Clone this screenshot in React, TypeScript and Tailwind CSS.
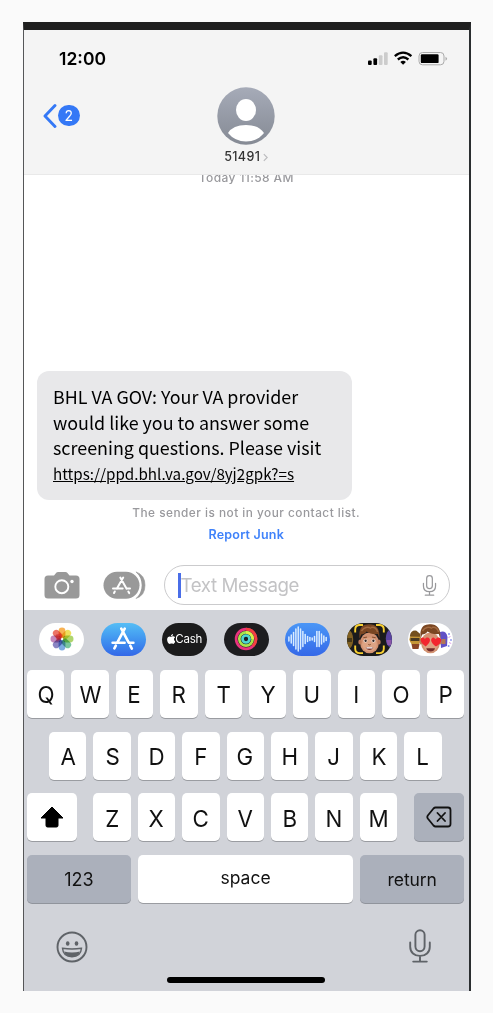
import React from "react";

const AppStoreGlyph = ({ className }: { className: string }) => (
  <svg viewBox="0 0 24 24" className={className} fill="none" stroke="currentColor" strokeLinecap="round">
    <path d="M10.3 1.6 17.6 15.4M13.7 1.6 6.4 15.4M19.3 18.6 20.8 21.6M4.8 18.6 3.4 21.4" />
    <path d="M1.600 15.800H13.600M18.200 15.800H22.400" />
  </svg>
);

const Mic = ({ className, width }: { className: string; width: number }) => (
  <svg viewBox="0 0 22 34" className={className} fill="none" stroke="currentColor" strokeWidth={width} strokeLinecap="round">
    <rect x="6.4" y="1.2" width="9.2" height="21" rx="4.6" />
    <path d="M1.2 13.5v4.2c0 5.8 4.2 9.2 9.8 9.2s9.8-3.4 9.8-9.2v-4.2M11 27v5.6M4.2 32.6h13.6" />
  </svg>
);

const Key = ({ label }: { label: string }) => (
  <div className="flex h-[48px] w-[37.4px] shrink-0 items-center justify-center rounded-[5px] bg-white pt-[2px] text-[23.5px] leading-none shadow-[0_1px_0_#9a9ca1]">
    <span className="scale-x-[0.95]">{label}</span>
  </div>
);

const Pill = ({ className, children }: { className: string; children: React.ReactNode }) => (
  <div className={"flex h-[33.5px] w-[45px] shrink-0 items-center justify-center overflow-hidden rounded-full " + className}>
    {children}
  </div>
);

const petals = ["#f7a83c", "#ecdc45", "#a4d05a", "#66bd90", "#6a9fdd", "#7a74bb", "#bb77b3", "#e9604f"];

const PhotosIcon = () => (
  <svg viewBox="-12 -12 24 24" className="size-[24px]">
    {petals.map((c, i) => (
      <rect key={c} x="-3.4" y="-11.5" width="6.8" height="10.6" rx="3.4" fill={c} className="mix-blend-multiply" opacity="0.88" transform={`rotate(${i * 45})`} />
    ))}
    <path d="M-6-4.500-1.500-5.500 0 0-5.500 2Z" fill="#d0202c" opacity="0.55" />
    <circle r="1.2" fill="#fff" opacity="0.6" />
  </svg>
);

const ActivityIcon = () => (
  <svg viewBox="-12 -12 24 24" className="size-[24px]" fill="none" strokeWidth="2.700">
    <circle r="9.9" stroke="#e8337c" />
    <path d="M0-9.9A9.9 9.9 0 0 1 7 7" stroke="#f3413f" />
    <circle r="6.7" stroke="#a9e34b" />
    <path d="M0-6.7A6.7 6.7 0 0 1 6.7 0" stroke="#d8f04a" />
    <circle r="3.5" stroke="#4fd6cf" />
  </svg>
);

const bars = [4, 8, 13, 20, 24, 20, 15, 9, 5, 3, 2, 5, 15, 15, 10, 6, 3];

const AudioIcon = () => (
  <svg viewBox="0 0 45 34" className="h-[34px] w-[45px]" stroke="#d9ecff" strokeWidth="1.5" strokeLinecap="round">
    {bars.map((h, i) => (
      <path key={i} d={`M${3.9 + i * 2.33} ${17 - h / 2}v${h}`} />
    ))}
  </svg>
);

const Face = ({ hearts }: { hearts?: boolean }) => (
  <g>
    <ellipse cx="22.5" cy="20.8" rx="9.4" ry="10.4" fill="#d29272" />
    <ellipse cx="13" cy="20" rx="1.7" ry="2.6" fill="#bf7c5c" />
    <ellipse cx="32" cy="20" rx="1.7" ry="2.6" fill="#bf7c5c" />
    <ellipse cx="22.5" cy="22.5" rx="7.3" ry="7" fill="#dda384" />
    <path d="M12.600 16.500C11.500 7.500 14.500 2.600 20 2.500 28 .8 33.500 6 32.300 16.500L30.800 12C27 12.600 22 11.500 19.500 9.500 18.500 11.500 16 12.300 14.200 12.500Z" fill="#7a4622" />
    <path d="M14.500 9C17 5 21 4.500 24 6.500M24 5.500c3-1 6 1 6.500 4.500" stroke="#a26a41" strokeWidth="1.500" fill="none" />
    {hearts ? (
      <g fill="#f2262f">
        <path d="M17.7 24.5C10.5 19.5 12.2 14.5 15.4 15.6L17 17C19 13.8 23 16 21.8 19.2 21.1 21.3 19.5 22.9 17.7 24.5Z" />
        <path d="M28 24.5C22 21 22 15.5 25.7 15.6L27.7 17.3C29.5 14.3 33.8 15.5 33.1 19 32.5 21.4 30 23.2 28 24.5Z" />
        <path d="M18.3 26.3h8.7c-.8 4.3-7.8 4.3-8.7 0Z" fill="#722a29" />
      </g>
    ) : (
      <g>
        <ellipse cx="18.5" cy="18.8" rx="1.9" ry="1.6" fill="#fff" />
        <ellipse cx="26.5" cy="18.8" rx="1.9" ry="1.6" fill="#fff" />
        <circle cx="18.6" cy="18.8" r="1.2" fill="#33231e" />
        <circle cx="26.4" cy="18.8" r="1.2" fill="#33231e" />
        <path d="M16.300 15.700l3.700-.6M25 15.100l3.700.6M21.300 22.500q1.200.8 2.400 0" stroke="#7a4728" strokeWidth=".9" fill="none" />
        <path d="M18.800 25.300h7.400c-.6 3.600-6.800 3.600-7.400 0Z" fill="#74332f" />
        <path d="M19.400 25.300h6.200v1.100h-6.200Z" fill="#fff" />
      </g>
    )}
  </g>
);

const MemojiIcon = () => (
  <svg viewBox="0 0 45 34" className="h-[34px] w-[45px]">
    <ellipse cx="2" cy="17.500" rx="4.200" ry="9" fill="#806022" />
    <path d="M0 16h5v4H0Z" fill="#463819" />
    <ellipse cx="43" cy="16.500" rx="4.200" ry="8.500" fill="#5944a0" />
    <path d="M39.500 18h5v5h-4Z" fill="#8c57a8" />
    <Face />
    <path d="M8.200 10.500V7.500Q8.200 3 12.800 3H16M29 3h3.300Q36.800 3 36.800 7.500v3M36.800 23.500v3.200q0 4.400-4.500 4.400H29M16 31.100h-3.200q-4.600 0-4.600-4.400v-3.200" fill="none" stroke="#f7cf32" strokeWidth="1.900" />
  </svg>
);

const StickerIcon = () => (
  <svg viewBox="0 0 45 34" className="h-[34px] w-[45px]">
    <circle cx="7.2" cy="17.3" r="5.8" fill="#c59636" />
    <path d="M1.8 14.5Q2.5 7.8 8.5 8.7l3.5 3v3Z" fill="#74501e" />
    <path d="M2.5 16h9v3h-9Z" fill="#493a24" />
    <path d="M3.5 22h8l-1 5h-6Z" fill="#8a4425" />
    <path d="M32 10q6-2 7.5 5l-.5 9-6 2Z" fill="#6150c6" />
    <path d="M33.5 17h4v5h-4Z" fill="#b37655" />
    <g fill="#8995ef">
      <circle cx="41" cy="12" r="1" />
      <circle cx="43" cy="18" r=".9" />
      <circle cx="40.6" cy="24" r="1" />
    </g>
    <path d="M40.5 15.5l2-1M41 20.5l2.2 1" stroke="#df9ce6" />
    <Face hearts />
  </svg>
);

const CashIcon = () => (
  <div className="flex items-center text-white">
    <svg viewBox="0 0 16 19" className="mb-[1px] h-[10px] w-[8.5px]" fill="currentColor">
      <path d="M11.3.2c.2 2-1.7 4.3-3.7 4.2C7.3 2.5 9.3.4 11.3.2ZM8 5.5c.7 0 1.9-1 3.7-1 1.5 0 2.8.8 3.6 1.9-3.3 1.9-2.7 6.5.6 7.7-.8 2.2-2.5 4.7-4.2 4.7-1.3 0-1.8-.8-3.400-.8s-2.200.8-3.400.8C2.500 18.800.1 14.300.1 10.600c0-3.900 2.500-6 4.900-6 1.500 0 2.400.9 3 .9Z" />
    </svg>
    <span className="text-[11.5px] leading-none tracking-[-0.2px]">Cash</span>
  </div>
);

export default function App() {
  return (
    <div className="flex h-[1013px] w-[493px] items-start bg-[#fafafa] pl-[23px] pt-[22px] text-black [font-family:Inter,'Liberation_Sans',sans-serif]">
      <div className="flex h-[969px] w-[447.5px] flex-col overflow-hidden border-l border-r-2 border-t-[8px] border-l-[#555658] border-r-[#2b2e30] border-t-[#1f1f1f] bg-white">
        <header className="flex h-[145px] shrink-0 flex-col border-b border-[#e9e9e9] bg-[#f4f4f4]">
          <div className="flex h-[57px] items-center justify-between pl-[35px] pr-[21px]">
            <span className="text-[17.5px] font-semibold leading-none">12:00</span>
            <svg viewBox="0 0 80 16" className="h-[16px] w-[80px]">
              <rect x="0" y="9.5" width="3.7" height="4.5" rx="1" />
              <rect x="5.4" y="7.3" width="3.7" height="6.7" rx="1" />
              <rect x="10.8" y="4.2" width="3.7" height="9.8" rx="1" fill="#ccc" />
              <rect x="16" y="1.3" width="3.7" height="12.7" rx="1" fill="#ccc" />
              <g fill="none" stroke="#000" strokeWidth="2.3">
                <path d="M26.8 5.1q8.3-6.900 16.600 0M29.800 8.500q5.300-4.500 10.600 0" />
              </g>
              <path d="M35.100 13.800 32.300 11q2.800-2.300 5.600 0Z" />
              <rect x="51" y="1.500" width="25" height="12.300" rx="3.500" fill="none" stroke="#aaa" />
              <rect x="52.800" y="3.200" width="17.800" height="8.900" rx="1.200" />
              <path d="M77.500 5.700q3.200 2 0 4Z" fill="#aaa" />
            </svg>
          </div>
          <div className="flex h-[57px] items-center">
            <div className="flex w-[193px] items-center pl-[18px]">
              <svg viewBox="0 0 15 26" className="h-[26px] w-[15px]" fill="none" stroke="#3478f6" strokeWidth="2.9" strokeLinecap="round" strokeLinejoin="round">
                <path d="M13 2.5 3 13l10 10.5" />
              </svg>
              <span className="ml-[1px] flex size-[21.5px] items-center justify-center rounded-full bg-[#3478f6] text-[14px] leading-none text-white">2</span>
            </div>
            <svg viewBox="0 0 58 58" className="size-[58px]">
              <defs>
                <linearGradient id="avatar" x2="0" y2="1">
                  <stop stopColor="#a6abb8" />
                  <stop offset="1" stopColor="#858a94" />
                </linearGradient>
              </defs>
              <circle cx="29" cy="29" r="28.7" fill="url(#avatar)" />
              <ellipse cx="29" cy="23" rx="10" ry="11" fill="#fff" />
              <path d="M11 46q5-8 18-8t18 8q-7 8.5-18 8.5T11 46Z" fill="#fff" />
            </svg>
          </div>
          <div className="flex h-[26px] items-center justify-center gap-[3px]">
            <span className="text-[12.5px] font-medium leading-none tracking-[0.4px] text-[#333]">51491</span>
            <svg viewBox="0 0 6 10" className="h-[9px] w-[5px]" fill="none" stroke="#bbbbbe" strokeWidth="1.4">
              <path d="m1 1 4 4-4 4" />
            </svg>
          </div>
        </header>

        <main className="flex h-[434.5px] shrink-0 flex-col bg-white">
          <div className="flex h-[9px] items-end justify-center overflow-hidden">
            <span className="text-[12px] font-medium leading-[12px] tracking-[0.4px] text-[#99999d]">Today 11:58 AM</span>
          </div>
          <div className="ml-[13px] mt-[187px] h-[129px] w-[315px] whitespace-nowrap rounded-[12px] bg-[#e8e8ea] pl-[16px] pt-[13px] text-[17.9px] leading-[25.5px] [font-family:'Noto_Sans_CJK_SC',sans-serif]">
            <div>BHL VA GOV: Your VA provider</div>
            <div>would like you to answer some</div>
            <div>screening questions. Please visit</div>
            <div className="text-[15.2px] underline">https://ppd.bhl.va.gov/8yj2gpk?=s</div>
          </div>
          <div className="mt-[7px] text-center text-[11.8px] font-medium leading-[12px] tracking-[0.5px] text-[#99999d]">The sender is not in your contact list.</div>
          <div className="mt-[9px] text-center text-[12.5px] font-semibold leading-[13px] tracking-[0.2px] text-[#3f82fa]">Report Junk</div>
          <div className="mt-[24px] flex items-center pl-[19.5px]">
            <svg viewBox="0 0 36 28" className="h-[28px] w-[36px]">
              <path d="M4 4.5h6l2.5-3Q13 1 14 1h7.5q1 0 1.5.5l2.5 3H32q3.5 0 3.5 3.5v16q0 3.5-3.5 3.5H4Q.5 27.5.5 24V8Q.5 4.5 4 4.5Z" fill="#999" />
              <circle cx="17.8" cy="15.7" r="6.5" fill="none" stroke="#fff" strokeWidth="1.9" />
              <circle cx="28" cy="10.5" r="1.7" fill="#fff" />
            </svg>
            <svg viewBox="0 0 43 28" className="ml-[23px] h-[28px] w-[43px]">
              <rect x=".5" y=".7" width="36" height="27" rx="13.5" fill="#999" />
              <path d="M33 .9q9 3 9 13.3t-9 13.3q5.5-5 5.5-13.3T33 .9Z" fill="#999" stroke="#999" strokeWidth=".6" />
              <path d="M31.5 1.5q6.5 4.5 6.500 12.700T31.500 27" fill="none" stroke="#fff" strokeWidth="1.300" />
              <g fill="none" stroke="#fff" strokeWidth="2" strokeLinecap="round">
                <path d="m17.300 6.500 6.300 11.200M20.200 6.500l-6.400 11.200M25.300 20.500l.9 1.600M11.800 20.500l-.8 1.500M10 17.500h9.700M24 17.500h3" />
              </g>
            </svg>
            <div className="ml-[18.5px] flex h-[40px] w-[286px] items-center rounded-full border-[1.5px] border-[#cbcbcd] pl-[13px] pr-[12px]">
              <span className="h-[25px] w-[2.5px] bg-[#4a6ee8]" />
              <span className="pt-[2px] text-[18.7px] leading-none tracking-[-0.4px] text-[#c3c3c5]">Text Message</span>
              <Mic className="ml-auto h-[21px] w-[15px] text-[#99999c]" width={2} />
            </div>
          </div>
        </main>

        <section className="flex flex-1 flex-col bg-[#d1d3d9] pt-[13px]">
          <div className="flex gap-[16.5px] pl-[15px]">
            <Pill className="bg-white"><PhotosIcon /></Pill>
            <Pill className="bg-linear-to-b from-[#55bdf5] to-[#3467e8] text-white"><AppStoreGlyph className="size-[24px] stroke-[2.6px]" /></Pill>
            <Pill className="bg-[#1b1b1c]"><CashIcon /></Pill>
            <Pill className="bg-[#1d1d20]"><ActivityIcon /></Pill>
            <Pill className="bg-linear-to-b from-[#4b96f6] to-[#3568e8]"><AudioIcon /></Pill>
            <Pill className="bg-[#1b1b1c]"><MemojiIcon /></Pill>
            <Pill className="bg-white"><StickerIcon /></Pill>
          </div>
          <div className="mt-[14px] flex flex-col gap-[13.7px] px-[3px] text-[#111]">
            <div className="flex gap-[7px]">{"QWERTYUIOP".split("").map((k) => <Key key={k} label={k} />)}</div>
            <div className="flex gap-[7px] pl-[22px]">{"ASDFGHJKL".split("").map((k) => <Key key={k} label={k} />)}</div>
            <div className="flex">
              <div className="flex h-[48px] w-[50px] items-center justify-center rounded-[5px] bg-white shadow-[0_1px_0_#9a9ca1]">
                <svg viewBox="0 0 24 22" className="h-[22px] w-[24px]" stroke="#000" strokeLinejoin="round">
                  <path d="M12 1 23 12h-5v7.5q0 1.5-1.5 1.5h-9Q6 21 6 19.5V12H1Z" />
                </svg>
              </div>
              <div className="ml-[16.4px] flex gap-[7px]">{"ZXCVBNM".split("").map((k) => <Key key={k} label={k} />)}</div>
              <div className="ml-[16.8px] flex h-[48px] w-[50px] items-center justify-center rounded-[5px] bg-[#abb0bb] shadow-[0_1px_0_#90949c]">
                <svg viewBox="0 0 26 22" className="h-[22px] w-[26px]" fill="none" stroke="#111" strokeWidth="1.8" strokeLinecap="round" strokeLinejoin="round">
                  <path d="M9.5 1.5H22q2.5 0 2.5 2.5v14q0 2.5-2.5 2.5H9.5q-1 0-2-1L1.8 12.5q-1-1.5 0-3L7.5 2.5q1-1 2-1ZM11.5 7l7.5 8M19 7l-7.5 8" />
                </svg>
              </div>
            </div>
            <div className="flex gap-[7px] text-[17.5px] leading-none">
              <div className="flex h-[48px] w-[103.8px] items-center justify-center rounded-[5px] bg-[#abb0bb] pt-[1px] text-[18px] shadow-[0_1px_0_#90949c]">123</div>
              <div className="flex h-[48px] w-[215.5px] items-center justify-center rounded-[5px] bg-white pb-[2px] shadow-[0_1px_0_#9a9ca1]">space</div>
              <div className="flex h-[48px] w-[103.8px] items-center justify-center rounded-[5px] bg-[#abb0bb] pt-[1px] tracking-[-0.1px] shadow-[0_1px_0_#90949c]">return</div>
            </div>
          </div>
          <div className="mt-[26px] flex h-[34px] items-center justify-between pl-[32px] pr-[38px] text-[#5f6368]">
            <svg viewBox="0 0 32 32" className="mt-[2px] size-[32px]" fill="none" stroke="currentColor" strokeWidth="1.9">
              <circle cx="16" cy="16" r="14.5" />
              <ellipse cx="11.7" cy="12.5" rx="1.8" ry="2.3" fill="currentColor" stroke="none" />
              <ellipse cx="20.5" cy="12.5" rx="1.8" ry="2.3" fill="currentColor" stroke="none" />
              <path d="M6.5 17.3q9.5 1.5 19 0-.7 8.5-9.5 8.5t-9.5-8.5Z" strokeWidth="1.4" />
              <path d="M8 20.5q8 2 16 0-1.5 5-8 5t-8-5Z" fill="currentColor" stroke="none" />
            </svg>
            <Mic className="h-[34px] w-[22px]" width={1.9} />
          </div>
          <div className="ml-[143px] mt-[14px] h-[6px] w-[158px] rounded-full bg-black" />
        </section>
      </div>
    </div>
  );
}
